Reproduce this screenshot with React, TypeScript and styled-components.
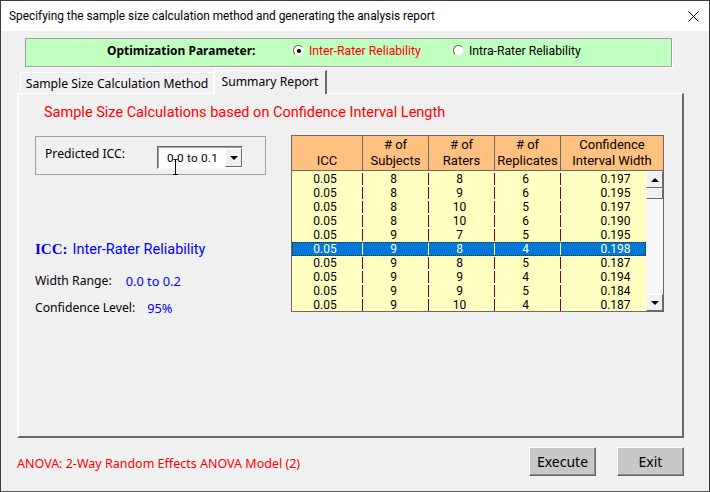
import React from "react";
import styled, { createGlobalStyle } from "styled-components";

const Global = createGlobalStyle`
  html, body { margin: 0; padding: 0; background: #f0f0f0; }
  * { box-sizing: border-box; }
`;

const Window = styled.div`
  width: 710px;
  height: 492px;
  background: #f0f0f0;
  border: 1px solid #3a3a3a;
  border-bottom-color: #5a5a5a;
  font-family: "Noto Sans", "Open Sans", sans-serif;
  font-size: 12.2px;
  color: #000;
  display: flex;
  flex-direction: column;
  overflow: hidden;
`;

const TitleBar = styled.div`
  height: 30px;
  flex: none;
  background: #fff;
  display: flex;
  align-items: center;
  justify-content: space-between;
  padding: 0 10px 0 8px;
  font-family: Roboto, sans-serif;
  font-size: 11.85px;
`;

const Content = styled.div`
  flex: 1;
  display: flex;
  flex-direction: column;
  padding: 7px 24px 0 16px;
`;

const ParamBar = styled.div`
  margin-left: 8px;
  margin-right: 13px;
  height: 29px;
  flex: none;
  padding-bottom: 4px;
  background: #c0ffc0;
  border: 1px solid #a0a0a0;
  box-shadow: 1px 1px 0 #fff;
  display: flex;
  align-items: center;
`;

const ParamTitle = styled.div`
  font-weight: 700;
  font-size: 12px;
  margin-left: 81px;
  width: 186px;
`;

const RadioLabel = styled.label<{ $width: number; $red?: boolean }>`
  display: flex;
  align-items: center;
  gap: 5px;
  width: ${(p) => p.$width}px;
  font-family: Roboto, sans-serif;
  font-size: 12.2px;
  color: ${(p) => (p.$red ? "#ff0000" : "#000")};
`;

const RadioDot = styled.span<{ $on?: boolean }>`
  width: 11px;
  height: 11px;
  border-radius: 50%;
  background: #fff;
  border: 1px solid #6a6a6a;
  border-right-color: #e8e8e8;
  border-bottom-color: #e8e8e8;
  display: flex;
  align-items: center;
  justify-content: center;
  &::after {
    content: "";
    width: 4px;
    height: 4px;
    border-radius: 50%;
    background: ${(p) => (p.$on ? "#000" : "transparent")};
  }
`;

const TabRow = styled.div`
  height: 22px;
  flex: none;
  margin-top: 4px;
  display: flex;
  align-items: flex-end;
  padding-left: 3px;
  position: relative;
  z-index: 1;
`;

const Tab = styled.div<{ $active?: boolean }>`
  background: #f0f0f0;
  border-top: 1px solid #fff;
  border-left: 1px solid #fff;
  border-right: ${(p) => (p.$active ? "2px solid #696969" : "1px solid #fff")};
  height: ${(p) => (p.$active ? 24 : 21)}px;
  width: ${(p) => (p.$active ? 113 : 194)}px;
  margin-bottom: ${(p) => (p.$active ? -1 : 0)}px;
  display: flex;
  align-items: center;
  justify-content: center;
  padding-bottom: ${(p) => (p.$active ? 3 : 0)}px;
`;

const TabPanel = styled.div`
  width: 667px;
  height: 345px;
  flex: none;
  border-top: 1px solid #fff;
  border-left: 2px solid #fff;
  border-right: 2px solid #696969;
  border-bottom: 2px solid #696969;
  display: flex;
  flex-direction: column;
  padding: 9px 0 0 16px;
`;

const Heading = styled.div`
  color: #ff0000;
  font-family: Roboto, sans-serif;
  font-size: 14.5px;
  line-height: 20px;
  margin-left: 9px;
`;

const PanelBody = styled.div`
  display: flex;
  margin-top: 12px;
  align-items: flex-start;
`;

const LeftCol = styled.div`
  width: 256px;
  flex: none;
  display: flex;
  flex-direction: column;
`;

const IccBox = styled.div`
  width: 231px;
  height: 39px;
  margin-top: 1px;
  border: 1px solid #a0a0a0;
  display: flex;
  align-items: flex-start;
  position: relative;
`;

const IccLabel = styled.span`
  margin: 8px 0 0 9px;
  width: 112px;
  line-height: 18px;
`;

const Combo = styled.div`
  margin-top: 9px;
  width: 86px;
  height: 23px;
  background: #fff;
  border: 1px solid #696969;
  border-right-color: #f8f8f8;
  border-bottom-color: #f8f8f8;
  box-shadow: inset 1px 1px 0 #a0a0a0;
  display: flex;
  align-items: center;
  font-family: Roboto, sans-serif;
  font-size: 11.8px;
`;

const ComboText = styled.span`
  flex: 1;
  text-align: center;
  padding-left: 2px;
  letter-spacing: 0.2px;
`;

const ArrowBtn = styled.span<{ $h?: number }>`
  width: 17px;
  height: ${(p) => p.$h ?? 17}px;
  flex: none;
  background: #f0f0f0;
  border: 1px solid;
  border-color: #fff #696969 #696969 #fff;
  display: flex;
  align-items: center;
  justify-content: center;
`;

const Caret = styled.span<{ $up?: boolean }>`
  width: 0;
  height: 0;
  border-left: 4px solid transparent;
  border-right: 4px solid transparent;
  ${(p) => (p.$up ? "border-bottom: 4px solid #000;" : "border-top: 4px solid #000;")}
`;

const Cursor = styled.svg`
  position: absolute;
  left: 136px;
  top: 22px;
`;

const IccTitle = styled.div`
  margin-top: 64px;
  color: #0000ff;
  font-family: Roboto, sans-serif;
  font-size: 14.5px;
  line-height: 20px;
  white-space: nowrap;
`;

const IccStrong = styled.b`
  font-family: "Liberation Serif", serif;
  font-size: 15px;
  margin-right: 5px;
`;

const InfoLine = styled.div<{ $top: number; $gap: number }>`
  margin-top: ${(p) => p.$top}px;
  line-height: 18px;
  display: flex;
  gap: ${(p) => p.$gap}px;
`;

const Blue = styled.span`
  color: #0000ff;
  font-size: 12.8px;
`;

const Table = styled.div`
  width: 373px;
  height: 177px;
  flex: none;
  border: 1px solid #696969;
  background: #ffffc0;
  display: flex;
  flex-direction: column;
  font-family: Roboto, sans-serif;
  font-size: 12px;
`;

const HeaderRow = styled.div`
  height: 35px;
  flex: none;
  background: #ffc080;
  border-bottom: 1px solid #696969;
  display: grid;
  grid-template-columns: 71px 66px 66px 66px 1fr;
  font-size: 13px;
`;

const HeaderCell = styled.div<{ $last?: boolean }>`
  border-right: ${(p) => (p.$last ? "none" : "1px solid #696969")};
  display: flex;
  flex-direction: column;
  justify-content: flex-end;
  align-items: center;
  line-height: 15.5px;
  padding-bottom: 2px;
  white-space: nowrap;
`;

const BodyArea = styled.div`
  flex: 1;
  display: flex;
  min-height: 0;
`;

const Rows = styled.div`
  flex: 1;
  min-width: 0;
  padding-top: 1px;
  overflow: hidden;
`;

const Row = styled.div<{ $sel?: boolean }>`
  height: 14px;
  display: grid;
  grid-template-columns: 71px 66px 66px 66px 86px;
  background: ${(p) => (p.$sel ? "#0078d7" : "transparent")};
  color: ${(p) => (p.$sel ? "#fff" : "#000")};
  outline: ${(p) => (p.$sel ? "1px dotted #3a2a10" : "none")};
  outline-offset: -1px;
  --sep: ${(p) => (p.$sel ? "#ffffff" : "#700050")};
`;

const Cell = styled.div<{ $last?: boolean }>`
  position: relative;
  text-align: center;
  line-height: 14px;
  padding-right: ${(p) => (p.$last ? 0 : 5)}px;
  &::after {
    content: "";
    display: ${(p) => (p.$last ? "none" : "block")};
    position: absolute;
    right: 0;
    top: 1px;
    bottom: 1px;
    width: 1px;
    background: var(--sep);
  }
`;

const LastValue = styled.span`
  display: block;
  margin-left: 23px;
`;

const Scrollbar = styled.div`
  width: 17px;
  flex: none;
  display: flex;
  flex-direction: column;
  background-color: #fff;
  background-image: conic-gradient(#f0f0f0 25%, #fff 0 50%, #f0f0f0 0 75%, #fff 0);
  background-size: 2px 2px;
`;

const Thumb = styled.span`
  height: 11px;
  flex: none;
  background: #f0f0f0;
  border: 1px solid;
  border-color: #fff #696969 #696969 #fff;
`;

const Spacer = styled.span`
  flex: 1;
`;

const Footer = styled.div`
  display: flex;
  align-items: flex-start;
  margin-top: 9px;
  width: 667px;
`;

const FooterNote = styled.div`
  flex: 1;
  color: #ff0000;
  font-size: 12.5px;
  line-height: 18px;
  margin-top: 8px;
`;

const Btn = styled.button`
  width: 67px;
  height: 29px;
  margin-left: 21px;
  padding: 0;
  background: #c8c8c8;
  border: 1px solid;
  border-color: #fff #696969 #696969 #fff;
  box-shadow: inset -1px -1px 0 #8a8a8a;
  font: inherit;
  font-size: 14px;
  color: #000;
`;

const data: [string, string, string, string, string][] = [
  ["0.05", "8", "8", "6", "0.197"],
  ["0.05", "8", "9", "6", "0.195"],
  ["0.05", "8", "10", "5", "0.197"],
  ["0.05", "8", "10", "6", "0.190"],
  ["0.05", "9", "7", "5", "0.195"],
  ["0.05", "9", "8", "4", "0.198"],
  ["0.05", "9", "8", "5", "0.187"],
  ["0.05", "9", "9", "4", "0.194"],
  ["0.05", "9", "9", "5", "0.184"],
  ["0.05", "9", "10", "4", "0.187"],
];

export default function App() {
  return (
    <Window>
      <Global />
      <TitleBar>
        <span>Specifying the sample size calculation method and generating the analysis report</span>
        <svg width="11" height="11" viewBox="0 0 11 11">
          <path d="M0.5 0.5L10.5 10.5M10.5 0.5L0.5 10.5" stroke="#000" strokeWidth="1" fill="none" />
        </svg>
      </TitleBar>
      <Content>
        <ParamBar>
          <ParamTitle>Optimization Parameter:</ParamTitle>
          <RadioLabel $width={160} $red>
            <RadioDot $on />
            Inter-Rater Reliability
          </RadioLabel>
          <RadioLabel $width={160}>
            <RadioDot />
            Intra-Rater Reliability
          </RadioLabel>
        </ParamBar>
        <TabRow>
          <Tab>Sample Size Calculation Method</Tab>
          <Tab $active>Summary Report</Tab>
        </TabRow>
        <TabPanel>
          <Heading>Sample Size Calculations based on Confidence Interval Length</Heading>
          <PanelBody>
            <LeftCol>
              <IccBox>
                <IccLabel>Predicted ICC:</IccLabel>
                <Combo>
                  <ComboText>0.0 to 0.1</ComboText>
                  <ArrowBtn $h={19}>
                    <Caret />
                  </ArrowBtn>
                </Combo>
                <Cursor width="7" height="16" viewBox="0 0 7 16">
                  <path d="M3.5 0V16M1 15.5H6M1.5 0.5H5.5" stroke="#000" strokeWidth="1" fill="none" />
                </Cursor>
              </IccBox>
              <IccTitle>
                <IccStrong>ICC:</IccStrong>Inter-Rater Reliability
              </IccTitle>
              <InfoLine $top={12} $gap={14}>
                <span>Width Range:</span>
                <Blue>0.0 to 0.2</Blue>
              </InfoLine>
              <InfoLine $top={9} $gap={12}>
                <span>Confidence Level:</span>
                <Blue>95%</Blue>
              </InfoLine>
            </LeftCol>
            <Table>
              <HeaderRow>
                <HeaderCell>ICC</HeaderCell>
                <HeaderCell>
                  <span># of</span>
                  <span>Subjects</span>
                </HeaderCell>
                <HeaderCell>
                  <span># of</span>
                  <span>Raters</span>
                </HeaderCell>
                <HeaderCell>
                  <span># of</span>
                  <span>Replicates</span>
                </HeaderCell>
                <HeaderCell $last>
                  <span>Confidence</span>
                  <span>Interval Width</span>
                </HeaderCell>
              </HeaderRow>
              <BodyArea>
                <Rows>
                  {data.map((r, i) => (
                    <Row key={i} $sel={i === 5}>
                      {r.map((v, j) => (
                        <Cell key={j} $last={j === 4}>
                          {j === 4 ? <LastValue>{v}</LastValue> : v}
                        </Cell>
                      ))}
                    </Row>
                  ))}
                </Rows>
                <Scrollbar>
                  <ArrowBtn $h={17}>
                    <Caret $up />
                  </ArrowBtn>
                  <Thumb />
                  <Spacer />
                  <ArrowBtn $h={17}>
                    <Caret />
                  </ArrowBtn>
                </Scrollbar>
              </BodyArea>
            </Table>
          </PanelBody>
        </TabPanel>
        <Footer>
          <FooterNote>ANOVA: 2-Way Random Effects ANOVA Model (2)</FooterNote>
          <Btn>Execute</Btn>
          <Btn>Exit</Btn>
        </Footer>
      </Content>
    </Window>
  );
}
